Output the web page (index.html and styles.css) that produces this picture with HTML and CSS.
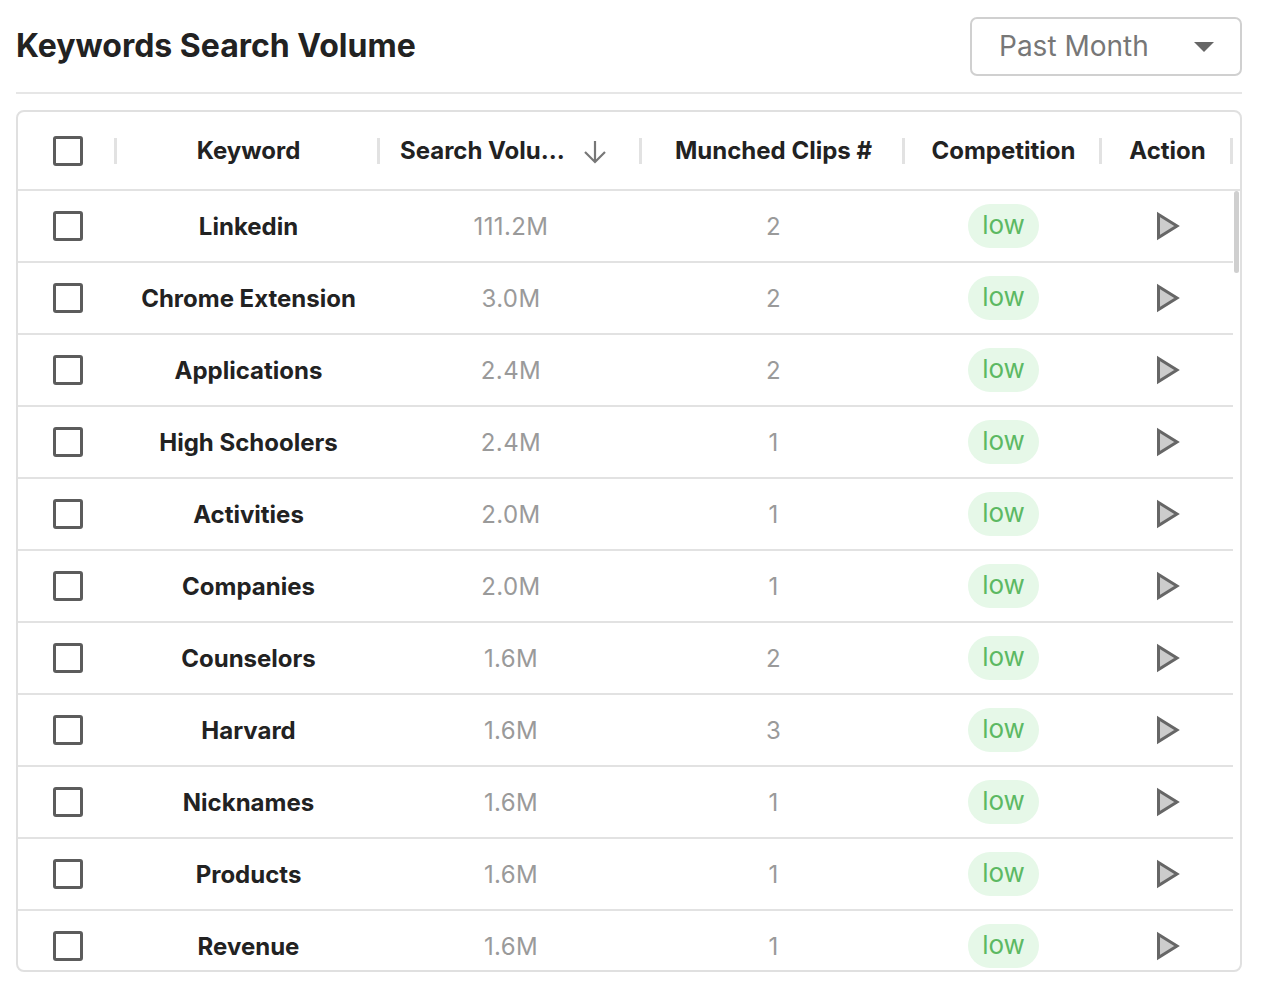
FILE: index.html
```html
<!DOCTYPE html>
<html lang="en">
<head>
  <meta charset="UTF-8" />
  <meta name="viewport" content="width=device-width, initial-scale=1.0"/>
  <title>Keywords Search Volume</title>
  <link rel="stylesheet" href="styles.css">
</head>
<body>
  <div class="container">
    <div class="top-bar">
      <h1>Keywords Search Volume</h1>
      <div class="select">
        <span>Past Month</span>
        <svg class="caret" width="20" height="10" viewBox="0 0 20 10"><polygon points="0,0 20,0 10,10" fill="#666"/></svg>
      </div>
    </div>
    <div class="divider"></div>

    <div class="table">
      <div class="row head">
        <div class="cell sep"><span class="checkbox"></span></div>
        <div class="cell sep">Keyword</div>
        <div class="cell sep sort">
          <span>Search Volu...</span>
          <svg width="26" height="26" viewBox="0 0 26 26"><path d="M13 2 V23 M3 13 L13 23 L23 13" fill="none" stroke="#777" stroke-width="2.2"/></svg>
        </div>
        <div class="cell sep">Munched Clips #</div>
        <div class="cell sep">Competition</div>
        <div class="cell sep">Action</div>
        <div class="cell"></div>
      </div>

      <div class="table-body">
        <div class="rows" id="rows"></div>
        <div class="scroll-track"><div class="scroll-thumb"></div></div>
      </div>
    </div>
  </div>

  <script>
    const data = [
      ['Linkedin', '111.2M', 2],
      ['Chrome Extension', '3.0M', 2],
      ['Applications', '2.4M', 2],
      ['High Schoolers', '2.4M', 1],
      ['Activities', '2.0M', 1],
      ['Companies', '2.0M', 1],
      ['Counselors', '1.6M', 2],
      ['Harvard', '1.6M', 3],
      ['Nicknames', '1.6M', 1],
      ['Products', '1.6M', 1],
      ['Revenue', '1.6M', 1]
    ];

    const playIcon = '<svg width="26" height="30" viewBox="0 0 26 30"><polygon points="3.5,3.5 22,15 3.5,26.5" fill="#cccccc" stroke="#666" stroke-width="3"/></svg>';

    document.getElementById('rows').innerHTML = data.map(([kw, vol, clips]) => `
      <div class="row">
        <div class="cell"><span class="checkbox"></span></div>
        <div class="cell keyword">${kw}</div>
        <div class="cell muted">${vol}</div>
        <div class="cell muted">${clips}</div>
        <div class="cell"><span class="pill">low</span></div>
        <div class="cell">${playIcon}</div>
      </div>`).join('');
  </script>
</body>
</html>
```

FILE: styles.css
```css
:root {
  --text-color: #222222;
  --muted-color: #9a9a9a;
  --line-color: #e2e2e2;
  --font-family: Inter, "Noto Sans", sans-serif;
}

* {
  box-sizing: border-box;
}

html, body {
  margin: 0;
  padding: 0;
  background: #ffffff;
  color: var(--text-color);
  font-family: var(--font-family);
}

.container {
  padding: 16px 20px 0 16px;
}

.top-bar {
  display: flex;
  justify-content: space-between;
  align-items: center;
  height: 60px;
}

h1 {
  margin: 0;
  font-size: 32px;
  font-weight: 700;
  padding-bottom: 2px;
}

.select {
  width: 272px;
  height: 59px;
  border: 2px solid #d0d0d0;
  border-radius: 7px;
  display: flex;
  align-items: center;
  justify-content: space-between;
  padding: 0 26px 0 27px;
  font-size: 28px;
  color: #777;
}

.caret {
  margin-top: 2px;
}

.divider {
  height: 2px;
  background: #e6e6e6;
  margin-top: 16px;
}

.table {
  margin-top: 16px;
  border: 2px solid #e0e0e0;
  border-radius: 8px;
  overflow: hidden;
}

.row {
  display: grid;
  grid-template-columns: 99px 263px 262px 263px 197px 131px;
  height: 72px;
  border-bottom: 2px solid var(--line-color);
}

.row.head {
  grid-template-columns: 99px 263px 262px 263px 197px 131px 1fr;
  height: 79px;
  font-size: 24px;
  font-weight: 700;
}

.cell {
  display: flex;
  align-items: center;
  justify-content: center;
}

.sep {
  background: linear-gradient(#e2e2e2, #e2e2e2) right center / 3px 26px no-repeat;
}

.sort {
  justify-content: space-between;
  padding: 0 34px 0 20px;
}

.sort svg {
  margin-top: 2px;
}

.checkbox {
  width: 30px;
  height: 30px;
  border: 3px solid #5c5c5c;
  border-radius: 3px;
}

.table-body {
  display: flex;
  height: 779px;
  overflow: hidden;
}

.rows {
  width: 1215px;
}

.keyword {
  font-size: 24px;
  font-weight: 700;
}

.muted {
  font-size: 24px;
  letter-spacing: 0.4px;
  color: var(--muted-color);
}

.pill {
  background: #e6f8e8;
  color: #5cb963;
  font-size: 26px;
  padding: 5px 14px 8px;
  border-radius: 22px;
  line-height: 31px;
}

.scroll-track {
  flex: 1;
  padding: 0 1px;
}

.scroll-thumb {
  height: 82px;
  background: #cfcfcf;
  border-radius: 4px;
}
```
